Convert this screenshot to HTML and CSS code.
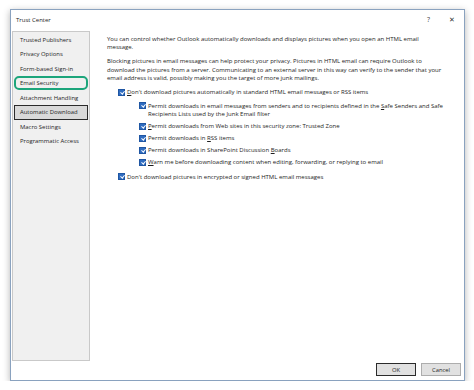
FILE: index.html
```html
<!DOCTYPE html>
<html>
	<head>
		<meta charset="UTF-8">
		<title>Trust Center</title>
		<link rel="stylesheet" href="styles.css">
	</head>
	<body>
		<div class="dialog">
			<div class="titlebar">
				<span class="title">Trust Center</span>
				<span class="help">?</span>
				<span class="close">&#x2715;</span>
			</div>

			<div class="main">
				<ul class="nav">
					<li>Trusted Publishers</li>
					<li>Privacy Options</li>
					<li>Form-based Sign-in</li>
					<li class="marked">Email Security</li>
					<li>Attachment Handling</li>
					<li class="current">Automatic Download</li>
					<li>Macro Settings</li>
					<li>Programmatic Access</li>
				</ul>

				<div class="pane">
					<p>You can control whether Outlook automatically downloads and displays pictures when you open an HTML email<br>message.</p>
					<p>Blocking pictures in email messages can help protect your privacy. Pictures in HTML email can require Outlook to<br>download the pictures from a server. Communicating to an external server in this way can verify to the sender that your<br>email address is valid, possibly making you the target of more junk mailings.</p>

					<div class="opt first">
						<span class="box"></span>
						<span><u>D</u>on't download pictures automatically in standard HTML email messages or RSS items</span>
					</div>
					<div class="opt sub">
						<span class="box"></span>
						<span>Permit downloads in email messages from senders and to recipients defined in the <u>S</u>afe Senders and Safe<br>Recipients Lists used by the Junk Email filter</span>
					</div>
					<div class="opt sub">
						<span class="box"></span>
						<span><u>P</u>ermit downloads from Web sites in this security zone: Trusted Zone</span>
					</div>
					<div class="opt sub">
						<span class="box"></span>
						<span>Permit downloads in <u>R</u>SS items</span>
					</div>
					<div class="opt sub">
						<span class="box"></span>
						<span>Permit downloads in SharePoint Discussion <u>B</u>oards</span>
					</div>
					<div class="opt sub">
						<span class="box"></span>
						<span><u>W</u>arn me before downloading content when editing, forwarding, or replying to email</span>
					</div>
					<div class="opt last">
						<span class="box"></span>
						<span>Don't download pictures in encrypted or signed HTML email messages</span>
					</div>
				</div>
			</div>

			<div class="buttons">
				<button class="btn default">OK</button>
				<button class="btn">Cancel</button>
			</div>
		</div>
	</body>
</html>
```

FILE: styles.css
```css
*{
	margin: 0;
	padding: 0;
	box-sizing: border-box;
}
ul,li{
	list-style: none;
}

body{
	background-color: #fff;
	font-family: "Open Sans", "Noto Sans", sans-serif;
	color: #1e1e1e;
}

.dialog{
	display: flex;
	flex-direction: column;
	width: 455px;
	height: 372px;
	margin: 9px 0 0 10px;
	border: 1px solid #8aa2bf;
	background-color: #fff;
	box-shadow: 0 2px 7px rgba(0,0,0,.3);
}

/* 标题栏 */
.titlebar{
	display: flex;
	align-items: center;
	height: 21px;
	padding: 0 9px 2px 5px;
	font-size: 6px;
}
.titlebar .title{
	flex: 1;
}
.titlebar .help{
	font-size: 7px;
	color: #444;
	margin-right: 19px;
}
.titlebar .close{
	font-size: 7px;
	color: #333;
}

.main{
	display: flex;
	height: 330px;
	padding-left: 1px;
}

/* 左侧菜单 */
.nav{
	width: 78px;
	height: 100%;
	border: 1px solid #c9c9c9;
	background-color: #f0f0f0;
	font-size: 5.9px;
	padding-top: 0.5px;
}
.nav li{
	position: relative;
	height: 14.5px;
	line-height: 13.5px;
	margin: 0 1px;
	padding-left: 5px;
	border: 1px solid transparent;
	white-space: nowrap;
}
.nav li.current{
	background-color: #d9d9d9;
	border-color: #2b2b2b;
}
.nav li.marked:after{
	content: '';
	position: absolute;
	left: -1px;
	right: -1px;
	top: -1px;
	bottom: 0;
	border: 2px solid #1ca57b;
	border-radius: 5px;
}

/* 右侧内容 */
.pane{
	flex: 1;
	padding: 3.5px 0 0 17px;
	font-size: 6px;
	line-height: 8.5px;
	white-space: nowrap;
}
.pane p{
	margin-bottom: 5.5px;
}

.opt{
	display: flex;
	align-items: flex-start;
	gap: 2px;
	margin: 0 0 3.5px 11px;
}
.opt.first{
	margin-bottom: 5px;
}
.opt.sub{
	margin-left: 32px;
}
.opt.last{
	margin-top: 6px;
}
.opt u{
	text-decoration-thickness: 0.5px;
	text-underline-offset: 1px;
}

.box{
	position: relative;
	flex: none;
	width: 7px;
	height: 7px;
	margin-top: 0.5px;
	background-color: #2f6cc0;
	border: 0.5px solid #1f56a3;
}
.box:after{
	content: '';
	position: absolute;
	left: 1.8px;
	top: 0.4px;
	width: 1.6px;
	height: 3.4px;
	border: solid #fff;
	border-width: 0 1px 1px 0;
	transform: rotate(40deg);
}

/* 底部按钮 */
.buttons{
	display: flex;
	justify-content: flex-end;
	gap: 5px;
	padding: 2px 3px 0 0;
}
.btn{
	width: 40px;
	height: 13px;
	border: 1px solid #adadad;
	background-color: #e1e1e1;
	font-family: "Open Sans", "Noto Sans", sans-serif;
	font-size: 5.8px;
	color: #1e1e1e;
}
.btn.default{
	border-color: #2b2b2b;
}
```
